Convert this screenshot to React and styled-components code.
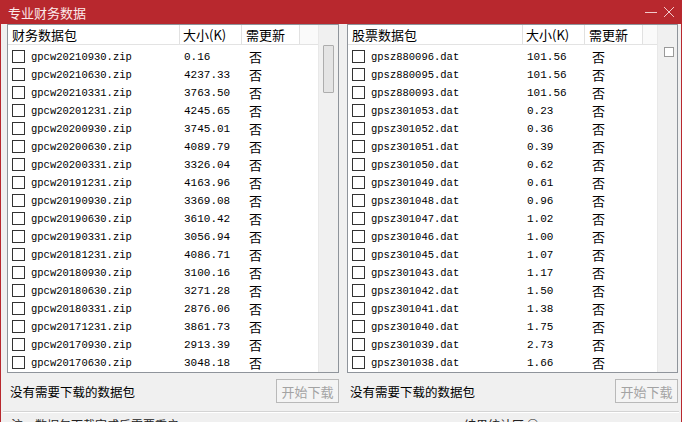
import React from 'react';
import styled, { createGlobalStyle } from 'styled-components';

const Global = createGlobalStyle`
	html, body {
		margin: 0;
		padding: 0;
		background: #f0f0f0;
	}
	body {
		font-family: "Noto Sans CJK SC", "Liberation Sans", sans-serif;
		color: #000;
	}
`;

const Ventana = styled.div`
	width: 682px;
	height: 422px;
	box-sizing: border-box;
	border-left: 1px solid #b8282e;
	border-right: 1px solid #b8282e;
	background: #f0f0f0;
	overflow: hidden;
	display: flex;
	flex-direction: column;
`;

const Titulo = styled.div`
	height: 24px;
	flex: none;
	background: #b8282e;
	display: flex;
	align-items: center;
	justify-content: space-between;
	padding: 0 6px 0 7px;
	color: #fbeaea;
	font-size: 13px;
`;

const Controles = styled.div`
	display: flex;
	align-items: center;
	gap: 6px;
`;

const Cuerpo = styled.div`
	display: grid;
	grid-template-columns: 332px 331px;
	column-gap: 8px;
	padding: 0 3px 0 6px;
`;

const Panel = styled.div`
	display: flex;
	flex-direction: column;
`;

const Lista = styled.div`
	height: 349px;
	box-sizing: border-box;
	border: 1px solid #8f949b;
	background: #fff;
	display: flex;
	overflow: hidden;
`;

const Tabla = styled.div`
	flex: 1;
	display: flex;
	flex-direction: column;
`;

const Fila = styled.div`
	display: grid;
	grid-template-columns: ${(p) => p.$cols};
	height: ${(p) => (p.$head ? '20px' : '18px')};
	flex: none;
	align-items: center;
	border-bottom: ${(p) => (p.$head ? '1px solid #e3e3e3' : 'none')};
	margin-bottom: ${(p) => (p.$head ? '2px' : '0')};
	box-sizing: border-box;
`;

const Cabecera = styled.div`
	height: 100%;
	display: flex;
	align-items: center;
	padding-left: ${(p) => p.$pad || 4}px;
	font-size: 13px;
	border-right: ${(p) => (p.$last ? 'none' : '1px solid #e1e1e1')};
	box-sizing: border-box;
	background: ${(p) => (p.$last ? '#fafafa' : '#fff')};
`;

const Celda = styled.div`
	display: flex;
	align-items: center;
	gap: 6px;
	padding-left: ${(p) => p.$pad || 0}px;
	font-family: ${(p) =>
		p.$cjk ? '"Noto Sans CJK SC", sans-serif' : '"Liberation Mono", monospace'};
	font-size: ${(p) => p.$size || 11}px;
	white-space: nowrap;
`;

const Nombre = styled.span`
	font-size: 10.5px;
`;

const Casilla = styled.span`
	width: 13px;
	height: 13px;
	box-sizing: border-box;
	border: 1px solid #333;
	background: #fff;
	flex: none;
`;

const Barra = styled.div`
	width: 20px;
	flex: none;
	background: #f0f0f0;
	border-left: 1px solid #e8e8e8;
	display: flex;
	justify-content: center;
	padding-top: ${(p) => p.$top}px;
	box-sizing: border-box;
`;

const Pulgar = styled.div`
	width: 11px;
	height: 48px;
	box-sizing: border-box;
	border: 1px solid #adadad;
	border-radius: 1px;
	background: #e4e4e4;
`;

const Cuadrito = styled.div`
	width: 10px;
	height: 10px;
	box-sizing: border-box;
	border: 1px solid #9a9a9a;
	background: #fff;
	margin-left: 2px;
`;

const Pie = styled.div`
	height: 38px;
	display: flex;
	align-items: center;
	justify-content: space-between;
	padding: 0 0 2px 3px;
	box-sizing: border-box;
`;

const Estado = styled.span`
	font-size: 12.5px;
`;

const Boton = styled.button`
	width: 63px;
	height: 24px;
	border: 1px solid #b9b9b9;
	background: #f4f4f4;
	color: #a3a3a3;
	font-family: "Noto Sans CJK SC", sans-serif;
	font-size: 13px;
	padding: 0;
`;

const Separador = styled.div`
	height: 0;
	border-top: 1px solid #d4d4d4;
	border-bottom: 1px solid #fff;
	margin: 0 2px;
`;

const Inferior = styled.div`
	display: grid;
	grid-template-columns: 453px auto;
	padding: 3px 0 0 10px;
	font-size: 12px;
	color: #222;
	white-space: nowrap;
`;

const financieros = [
	['gpcw20210930.zip', '0.16'],
	['gpcw20210630.zip', '4237.33'],
	['gpcw20210331.zip', '3763.50'],
	['gpcw20201231.zip', '4245.65'],
	['gpcw20200930.zip', '3745.01'],
	['gpcw20200630.zip', '4089.79'],
	['gpcw20200331.zip', '3326.04'],
	['gpcw20191231.zip', '4163.96'],
	['gpcw20190930.zip', '3369.08'],
	['gpcw20190630.zip', '3610.42'],
	['gpcw20190331.zip', '3056.94'],
	['gpcw20181231.zip', '4086.71'],
	['gpcw20180930.zip', '3100.16'],
	['gpcw20180630.zip', '3271.28'],
	['gpcw20180331.zip', '2876.06'],
	['gpcw20171231.zip', '3861.73'],
	['gpcw20170930.zip', '2913.39'],
	['gpcw20170630.zip', '3048.18'],
];

const acciones = [
	['gpsz880096.dat', '101.56'],
	['gpsz880095.dat', '101.56'],
	['gpsz880093.dat', '101.56'],
	['gpsz301053.dat', '0.23'],
	['gpsz301052.dat', '0.36'],
	['gpsz301051.dat', '0.39'],
	['gpsz301050.dat', '0.62'],
	['gpsz301049.dat', '0.61'],
	['gpsz301048.dat', '0.96'],
	['gpsz301047.dat', '1.02'],
	['gpsz301046.dat', '1.00'],
	['gpsz301045.dat', '1.07'],
	['gpsz301043.dat', '1.17'],
	['gpsz301042.dat', '1.50'],
	['gpsz301041.dat', '1.38'],
	['gpsz301040.dat', '1.75'],
	['gpsz301039.dat', '2.73'],
	['gpsz301038.dat', '1.66'],
];

function Paquete({titulo, cols, datos, barra}) {
	return (
		<Panel>
			<Lista>
				<Tabla>
					<Fila $head $cols={cols}>
						<Cabecera>{titulo}</Cabecera>
						<Cabecera $pad={3}>大小(K)</Cabecera>
						<Cabecera>需更新</Cabecera>
						<Cabecera $last />
					</Fila>
					{datos.map(([nombre, tam]) => (
						<Fila key={nombre} $cols={cols}>
							<Celda $pad={4}>
								<Casilla />
								<Nombre>{nombre}</Nombre>
							</Celda>
							<Celda $pad={4}>{tam}</Celda>
							<Celda $pad={7} $cjk $size={13}>
								否
							</Celda>
							<span />
						</Fila>
					))}
				</Tabla>
				{barra}
			</Lista>
			<Pie>
				<Estado>没有需要下载的数据包</Estado>
				<Boton disabled>开始下载</Boton>
			</Pie>
		</Panel>
	);
}

export default function App() {
	return (
		<Ventana>
			<Global />
			<Titulo>
				<span>专业财务数据</span>
				<Controles>
					<svg width="12" height="12" viewBox="0 0 12 12">
						<line x1="0" y1="6.5" x2="12" y2="6.5" stroke="#f2c9cb" strokeWidth="1" />
					</svg>
					<svg width="12" height="12" viewBox="0 0 12 12">
						<path d="M1 1 L11 11 M11 1 L1 11" stroke="#f2c9cb" strokeWidth="1" fill="none" />
					</svg>
				</Controles>
			</Titulo>
			<Cuerpo>
				<Paquete
					titulo="财务数据包"
					cols="172px 62px 58px 1fr"
					datos={financieros}
					barra={
						<Barra $top={20}>
							<Pulgar />
						</Barra>
					}
				/>
				<Paquete
					titulo="股票数据包"
					cols="175px 62px 58px 1fr"
					datos={acciones}
					barra={
						<Barra $top={22}>
							<Cuadrito />
						</Barra>
					}
				/>
			</Cuerpo>
			<Separador />
			<Inferior>
				<span>注：数据包下载完成后需要重启</span>
				<span>结果统计区 ○</span>
			</Inferior>
		</Ventana>
	);
}
